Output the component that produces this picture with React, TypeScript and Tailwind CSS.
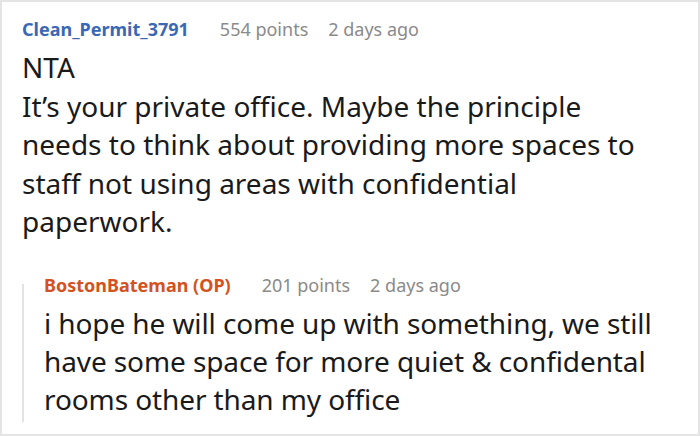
const App = () => {
  return (
    <div className="w-[700px] h-[436px] border-2 border-[#e4e4e4] bg-white overflow-hidden font-['Noto_Sans',sans-serif]">
      <div className="pl-5 pr-3 pt-[15px]">
        <div className="flex items-center gap-[31px] text-[18px] leading-[24px]">
          <span className="font-bold text-[#3a68b4]">Clean_Permit_3791</span>
          <span className="flex gap-[20px] text-[#8a8a8a]">
            <span>554 points</span>
            <span>2 days ago</span>
          </span>
        </div>
        <div className="mt-[7px] pr-[38px] text-[28px] leading-[38.5px] text-[#1a1a1a]">
          <p>NTA</p>
          <p>It’s your private office. Maybe the principle needs to think about providing more spaces to staff not using areas with confidential paperwork.</p>
        </div>
        <div className="mt-[32px] flex">
          <div className="mt-[11px] mb-[-4px] w-[2px] shrink-0 bg-[#e3e3e3]" />
          <div className="pl-5">
            <div className="flex items-center gap-[31px] text-[18px] leading-[24px]">
              <span className="font-bold text-[#d4521f]">BostonBateman (OP)</span>
              <span className="flex gap-[20px] text-[#8a8a8a]">
                <span>201 points</span>
                <span>2 days ago</span>
              </span>
            </div>
            <p className="mt-[7px] text-[28px] leading-[38px] tracking-[-0.1px] text-[#1a1a1a]">
              i hope he will come up with something, we still have some space for more quiet &amp; confidental rooms other than my office
            </p>
          </div>
        </div>
      </div>
    </div>
  );
};

export default App;
